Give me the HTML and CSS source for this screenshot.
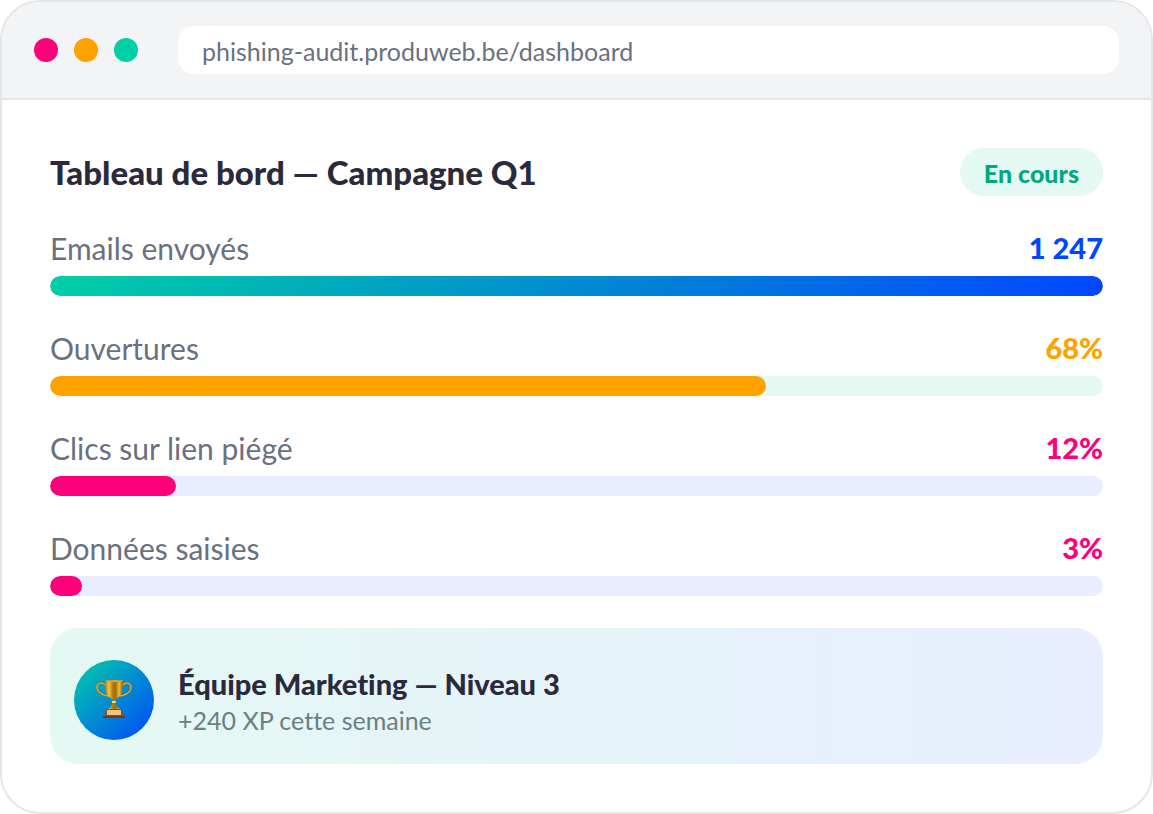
FILE: index.html
```
<!DOCTYPE html>
<html lang="fr">
<head>
  <meta charset="UTF-8" />
  <meta name="viewport" content="width=device-width, initial-scale=1.0" />
  <title>Tableau de bord — Campagne Q1</title>
  <link rel="stylesheet" href="styles.css">
</head>
<body>
  <div class="browser">
    <header class="browser-bar">
      <div class="dots">
        <span class="dot dot-pink"></span>
        <span class="dot dot-orange"></span>
        <span class="dot dot-green"></span>
      </div>
      <input class="address" type="text" aria-label="Adresse" value="phishing-audit.produweb.be/dashboard" readonly />
    </header>

    <main class="dashboard">
      <div class="dashboard-header">
        <h1>Tableau de bord — Campagne Q1</h1>
        <span class="badge">En cours</span>
      </div>

      <div class="stat">
        <div class="stat-row">
          <span class="stat-label">Emails envoyés</span>
          <span class="stat-value blue">1 247</span>
        </div>
        <div class="track"><div class="fill fill-gradient" style="width: 100%"></div></div>
      </div>

      <div class="stat">
        <div class="stat-row">
          <span class="stat-label">Ouvertures</span>
          <span class="stat-value orange">68%</span>
        </div>
        <div class="track track-green"><div class="fill fill-orange" style="width: 68%"></div></div>
      </div>

      <div class="stat">
        <div class="stat-row">
          <span class="stat-label">Clics sur lien piégé</span>
          <span class="stat-value pink">12%</span>
        </div>
        <div class="track"><div class="fill fill-pink" style="width: 12%"></div></div>
      </div>

      <div class="stat">
        <div class="stat-row">
          <span class="stat-label">Données saisies</span>
          <span class="stat-value pink">3%</span>
        </div>
        <div class="track"><div class="fill fill-pink" style="width: 3%"></div></div>
      </div>

      <section class="team">
        <div class="team-icon">
          <svg viewBox="0 0 36 42" width="36" height="42" aria-hidden="true">
            <defs>
              <linearGradient id="gold" x1="0" x2="1" y1="0" y2="0">
                <stop offset="0" stop-color="#b87908" />
                <stop offset="0.22" stop-color="#f0c544" />
                <stop offset="0.45" stop-color="#b0760c" />
                <stop offset="0.6" stop-color="#a66c08" />
                <stop offset="0.78" stop-color="#f0bd36" />
                <stop offset="1" stop-color="#996006" />
              </linearGradient>
            </defs>
            <path d="M10 7C7 2 1 4 1 8c0 5 5 8 11 9M26 7c3-5 9-3 9 1 0 5-5 8-11 9" fill="none" stroke="#a87414" stroke-width="2" stroke-linecap="round" />
            <path d="M10 7C7 2 1 4 1 8c0 5 5 8 11 9M26 7c3-5 9-3 9 1 0 5-5 8-11 9" fill="none" stroke="#eac052" stroke-width="1" stroke-linecap="round" />
            <path d="M9 2h18c0 9-1 15-7 18-1 1-1 2-1 3l2 5 3 2H12l3-2 2-5c0-1 0-2-1-3C10 17 9 11 9 2z" fill="url(#gold)" />
            <ellipse cx="18" cy="2" rx="9" ry="1" fill="#d9a52d" />
            <path d="M16 23h4" stroke="#f9dc70" stroke-width="2" />
            <path d="M10 30h16l1 7H9z" fill="#964713" />
            <path d="M11 31h14v5H11z" fill="#efc586" />
            <path d="M7 37h22v2H7z" fill="#7d3610" />
          </svg>
        </div>
        <div class="team-text">
          <h2>Équipe Marketing — Niveau 3</h2>
          <p>+240 XP cette semaine</p>
        </div>
      </section>
    </main>
  </div>
</body>
</html>
```
FILE: styles.css
```
:root {
  --blue: #0046ff;
  --green: #00d0a5;
  --orange: #ffa200;
  --pink: #ff007a;
  --dark: #2a2a3c;
  --muted: #6b7080;
  --border: #e5e6e9;
  --mint: #e4f9f3;
  --ice: #e8eeff;
}

* {
  box-sizing: border-box;
}

body {
  margin: 0;
  background: #fff;
  color: var(--dark);
  font-family: Lato, "Open Sans", sans-serif;
  font-variant-ligatures: none;
}

.browser {
  border: 2px solid var(--border);
  border-radius: 40px;
  background: #fff;
  overflow: hidden;
}

.browser-bar {
  display: flex;
  align-items: center;
  gap: 40px;
  padding: 24px 32px;
  background: #f3f4f6;
  border-bottom: 2px solid var(--border);
}

.dots {
  display: flex;
  gap: 16px;
}

.dot {
  width: 24px;
  height: 24px;
  border-radius: 50%;
}

.dot-pink {
  background: var(--pink);
}

.dot-orange {
  background: var(--orange);
}

.dot-green {
  background: var(--green);
}

.address {
  flex: 1;
  min-width: 0;
  height: 48px;
  padding: 2px 24px 0;
  border: none;
  border-radius: 16px;
  background: #fff;
  color: var(--muted);
  font-family: inherit;
  font-size: 25px;
  outline: none;
}

.dashboard {
  display: flex;
  flex-direction: column;
  gap: 32px;
  padding: 48px;
}

.dashboard-header {
  display: flex;
  align-items: center;
  justify-content: space-between;
}

h1,
h2,
p {
  margin: 0;
}

h1 {
  font-size: 33px;
  line-height: 48px;
  font-weight: 900;
}

.badge {
  padding: 2px 24px 0;
  border-radius: 24px;
  background: var(--mint);
  color: #00a87e;
  font-size: 25px;
  line-height: 46px;
  font-weight: 900;
}

.stat {
  display: flex;
  flex-direction: column;
  gap: 8px;
}

.stat-row {
  display: flex;
  justify-content: space-between;
  line-height: 40px;
}

.stat-label {
  color: var(--muted);
  font-size: 30px;
}

.stat-value {
  font-size: 29px;
  font-weight: 900;
}

.blue {
  color: var(--blue);
}

.orange {
  color: var(--orange);
}

.pink {
  color: var(--pink);
}

.track {
  height: 20px;
  border-radius: 10px;
  background: var(--ice);
  overflow: hidden;
}

.track-green {
  background: var(--mint);
}

.fill {
  height: 100%;
  border-radius: 10px;
}

.fill-gradient {
  background: linear-gradient(135deg, var(--green), var(--blue));
}

.fill-orange {
  background: var(--orange);
}

.fill-pink {
  background: var(--pink);
}

.team {
  display: flex;
  align-items: center;
  gap: 24px;
  padding: 32px 24px 24px;
  border-radius: 28px;
  background: linear-gradient(90deg, var(--mint), var(--ice));
}

.team-icon {
  display: flex;
  align-items: center;
  justify-content: center;
  width: 80px;
  height: 80px;
  border-radius: 50%;
  background: linear-gradient(135deg, var(--green), var(--blue));
}

h2 {
  font-size: 29px;
  line-height: 40px;
  font-weight: 900;
}

.team-text p {
  color: #6b7f82;
  font-size: 25px;
  line-height: 32px;
}
```
